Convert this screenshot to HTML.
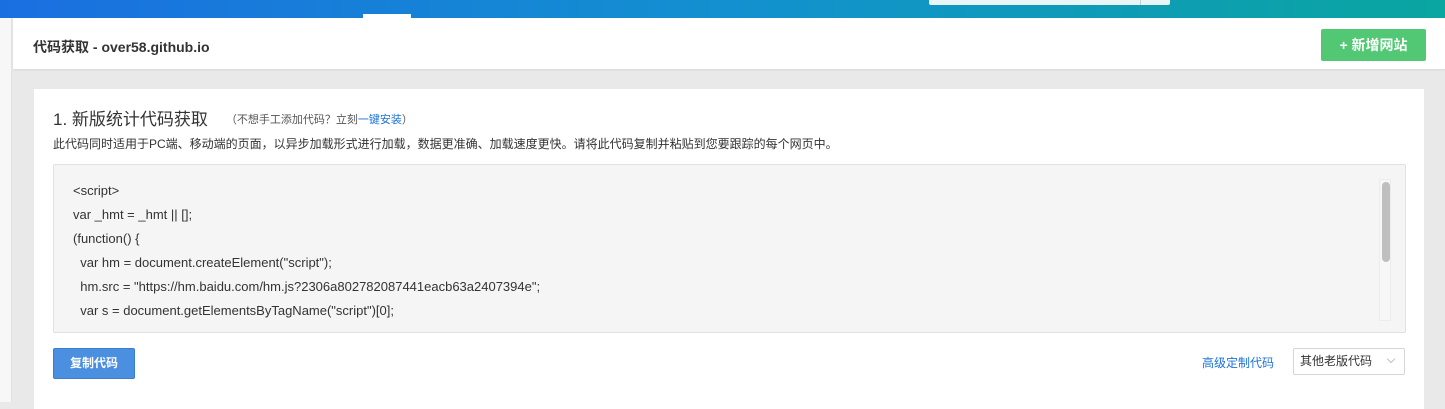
<!DOCTYPE html>
<html><head><meta charset="utf-8"><style>
*{margin:0;padding:0;box-sizing:border-box}
body{width:1445px;height:402px;overflow:hidden;background:#e9e9e9;font-family:"Liberation Sans","Noto Sans CJK SC",sans-serif;position:relative}
.top{position:absolute;left:0;top:0;width:1445px;height:18px;background:linear-gradient(90deg,#1a6fe0 0%,#1390d0 50%,#0aa6a0 100%)}
.tab{position:absolute;left:363px;top:14px;width:48px;height:4px;background:#fff}
.search{position:absolute;left:929px;top:0;width:241px;height:5px;background:#e8f6f8;border-radius:0 0 2px 2px}
.search i{position:absolute;left:211px;top:0;width:1px;height:5px;background:#ccc}
.side{position:absolute;left:0;top:18px;width:12px;height:384px;background:#f7f7f7;border-right:1px solid #e2e2e2}
.head{position:absolute;left:13px;top:18px;width:1432px;height:51px;background:#fff;box-shadow:0 1px 2px rgba(0,0,0,.08)}
.head h1{position:absolute;left:20px;top:19px;font-size:14px;font-weight:bold;color:#333}
.add{position:absolute;left:1321px;top:29px;width:105px;height:32px;background:#52c874;border-radius:2px;color:#fff;font-size:14px;line-height:32px;text-align:center;font-weight:bold}
.card{position:absolute;left:34px;top:89px;width:1390px;height:320px;background:#fff}
.t1{position:absolute;left:19px;top:16px;font-size:17px;color:#333}
.t1 span{font-size:11px;margin-left:18px;color:#555;vertical-align:2px}
.t1 a{color:#1a73d9}
.desc{position:absolute;left:19px;top:46px;font-size:12px;color:#333}
.code{position:absolute;left:19px;top:75px;width:1353px;height:169px;background:#f5f5f5;border:1px solid #e1e1e1;border-radius:2px;font-size:13px;color:#333;padding:14px 0 0 19px;line-height:24px;white-space:pre}
.sb{position:absolute;left:1325px;top:14px;width:12px;height:142px;border:1px solid #ececec;background:#f7f7f7}
.sb i{position:absolute;left:2px;top:2px;width:8px;height:80px;background:#bfbfbf;border-radius:4px}
.copy{position:absolute;left:19px;top:259px;width:82px;height:31px;background:#4a8fe0;border:1px solid #3a7fd0;border-radius:2px;color:#fff;font-size:12px;line-height:29px;text-align:center;font-weight:bold}
.adv{position:absolute;left:1168px;top:265px;font-size:12px;color:#1a73d9}
.sel{position:absolute;left:1259px;top:259px;width:112px;height:27px;border:1px solid #d5d5d5;border-radius:2px;font-size:12px;color:#333;line-height:25px;padding-left:6px}
.sel b{position:absolute;right:10px;top:7px;width:6px;height:6px;border-right:1px solid #b8c4d0;border-bottom:1px solid #b8c4d0;transform:rotate(45deg)}
</style></head><body>
<div class="top"><div class="tab"></div><div class="search"><i></i></div></div>
<div class="side"></div>
<div class="head"><h1>代码获取 - over58.github.io</h1></div>
<div class="add">+ 新增网站</div>
<div class="card">
<div class="t1">1. 新版统计代码获取<span>（不想手工添加代码？立刻<a>一键安装</a>）</span></div>
<div class="desc">此代码同时适用于PC端、移动端的页面，以异步加载形式进行加载，数据更准确、加载速度更快。请将此代码复制并粘贴到您要跟踪的每个网页中。</div>
<div class="code">&lt;script&gt;
var _hmt = _hmt || [];
(function() {
  var hm = document.createElement("script");
  hm.src = "https://hm.baidu.com/hm.js?2306a802782087441eacb63a2407394e";
  var s = document.getElementsByTagName("script")[0];<div class="sb"><i></i></div></div>
<div class="copy">复制代码</div>
<div class="adv">高级定制代码</div>
<div class="sel">其他老版代码<b></b></div>
</div>
</body></html>
